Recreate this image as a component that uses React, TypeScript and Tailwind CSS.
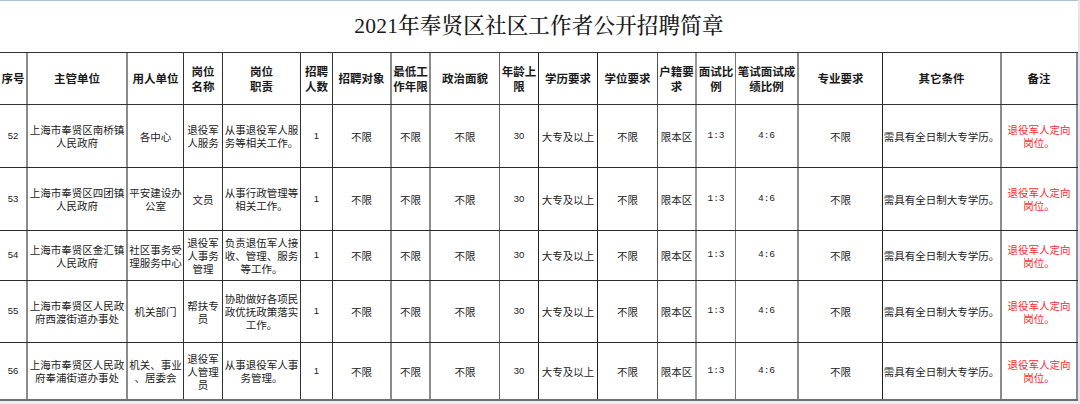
import React from "react";

type Col = { w: string; b: string };

const cols: Col[] = [
  { w: "w-[28px]", b: "border-r-2 border-r-[#8c8c8c]" },
  { w: "w-[100px]", b: "border-r-2 border-r-[#8c8c8c]" },
  { w: "w-[56px]", b: "border-r border-r-[#333333]" },
  { w: "w-[39px]", b: "border-r border-r-[#333333]" },
  { w: "w-[78px]", b: "border-r border-r-[#333333]" },
  { w: "w-[32px]", b: "border-r border-r-[#333333]" },
  { w: "w-[59px]", b: "border-r-2 border-r-[#8c8c8c]" },
  { w: "w-[39px]", b: "border-r-2 border-r-[#8c8c8c]" },
  { w: "w-[69px]", b: "border-r border-r-[#666666]" },
  { w: "w-[39px]", b: "border-r border-r-[#222222]" },
  { w: "w-[59px]", b: "border-r border-r-[#222222]" },
  { w: "w-[60px]", b: "border-r border-r-[#555555]" },
  { w: "w-[39px]", b: "border-r-2 border-r-[#999999]" },
  { w: "w-[39px]", b: "border-r border-r-[#777777]" },
  { w: "w-[63px]", b: "border-r-2 border-r-[#8c8c8c]" },
  { w: "w-[84px]", b: "border-r border-r-[#222222]" },
  { w: "w-[119px]", b: "border-r-2 border-r-[#8c8c8c]" },
  { w: "w-[76px]", b: "border-r-2 border-r-[#8c8c8c]" },
];

const header: string[][] = [
  ["序号"],
  ["主管单位"],
  ["用人单位"],
  ["岗位", "名称"],
  ["岗位", "职责"],
  ["招聘", "人数"],
  ["招聘对象"],
  ["最低工", "作年限"],
  ["政治面貌"],
  ["年龄上", "限"],
  ["学历要求"],
  ["学位要求"],
  ["户籍要", "求"],
  ["面试比", "例"],
  ["笔试面试成", "绩比例"],
  ["专业要求"],
  ["其它条件"],
  ["备注"],
];

type Row = { h: string; last?: boolean; cells: string[][] };

const common = (
  no: string,
  a: string[],
  b: string[],
  c: string[],
  d: string[]
): string[][] => [
  [no],
  a,
  b,
  c,
  d,
  ["1"],
  ["不限"],
  ["不限"],
  ["不限"],
  ["30"],
  ["大专及以上"],
  ["不限"],
  ["限本区"],
  ["1:3"],
  ["4:6"],
  ["不限"],
  ["需具有全日制大专学历。"],
  ["退役军人定向", "岗位。"],
];

const rows: Row[] = [
  {
    h: "h-[63px]",
    cells: common(
      "52",
      ["上海市奉贤区南桥镇", "人民政府"],
      ["各中心"],
      ["退役军", "人服务"],
      ["从事退役军人服", "务等相关工作。"]
    ),
  },
  {
    h: "h-[63px]",
    cells: common(
      "53",
      ["上海市奉贤区四团镇", "人民政府"],
      ["平安建设办", "公室"],
      ["文员"],
      ["从事行政管理等", "相关工作。"]
    ),
  },
  {
    h: "h-[50px]",
    cells: common(
      "54",
      ["上海市奉贤区金汇镇", "人民政府"],
      ["社区事务受", "理服务中心"],
      ["退役军", "人事务", "管理"],
      ["负责退伍军人接", "收、管理、服务", "等工作。"]
    ),
  },
  {
    h: "h-[62px]",
    cells: common(
      "55",
      ["上海市奉贤区人民政", "府西渡街道办事处"],
      ["机关部门"],
      ["帮扶专", "员"],
      ["协助做好各项民", "政优抚政策落实", "工作。"]
    ),
  },
  {
    h: "h-[58px]",
    last: true,
    cells: common(
      "56",
      ["上海市奉贤区人民政", "府奉浦街道办事处"],
      ["机关、事业", "、居委会"],
      ["退役军", "人管理", "员"],
      ["从事退役军人事", "务管理。"]
    ),
  },
];

const cjk = "font-['Noto_Sans_CJK_SC',sans-serif]";

function cellTextClass(ci: number): string {
  if (ci === 0 || ci === 5 || ci === 9) {
    return "font-['Liberation_Sans',sans-serif] text-[9.5px] text-[#222222]";
  }
  if (ci === 13 || ci === 14) {
    return "font-['Liberation_Mono',monospace] text-[9.5px] text-[#222222]";
  }
  if (ci === 17) {
    return cjk + " text-[10.5px] leading-[13px] text-[#ff2a2a]";
  }
  return cjk + " text-[10.5px] leading-[13px] text-[#222222]";
}

export default function App() {
  return (
    <div className="flex w-[1080px] h-[404px] bg-white overflow-hidden">
      <div className="flex flex-col w-[1078px]">
        <div className="h-px bg-[#a9c1da]" />
        <div className="h-[51px] flex items-center justify-center pb-[1px]">
          <span className="font-['Liberation_Serif','Noto_Serif_CJK_SC','Noto_Sans_CJK_SC',serif] text-[21.5px] font-medium text-[#1a1a1a] tracking-[0.2px]">
            2021年奉贤区社区工作者公开招聘简章
          </span>
        </div>
        <div className="border-t border-t-[#333333]">
          <div className="flex h-[52px] border-b border-b-[#333333]">
            {header.map((lines, ci) => (
              <div
                key={ci}
                className={`${cols[ci].w} ${cols[ci].b} shrink-0 flex flex-col items-center justify-center text-center ${cjk} font-bold text-[11.5px] leading-[14.5px] text-[#1a1a1a]`}
              >
                {lines.map((l, i) => (
                  <div key={i} className="whitespace-nowrap">
                    {l}
                  </div>
                ))}
              </div>
            ))}
          </div>
          {rows.map((r, ri) => (
            <div
              key={ri}
              className={`flex ${r.h} ${
                r.last
                  ? "border-b-2 border-b-[#6e6e6e]"
                  : "border-b border-b-[#2b2b2b]"
              }`}
            >
              {r.cells.map((lines, ci) => (
                <div
                  key={ci}
                  className={`${cols[ci].w} ${cols[ci].b} shrink-0 flex flex-col items-center justify-center text-center ${cellTextClass(ci)}`}
                >
                  {lines.map((l, i) => (
                    <div key={i} className="whitespace-nowrap">
                      {l}
                    </div>
                  ))}
                </div>
              ))}
            </div>
          ))}
        </div>
        <div className="flex-1 bg-[#eceef2]" />
      </div>
      <div className="w-[2px] bg-[#e2e5ef]" />
    </div>
  );
}
